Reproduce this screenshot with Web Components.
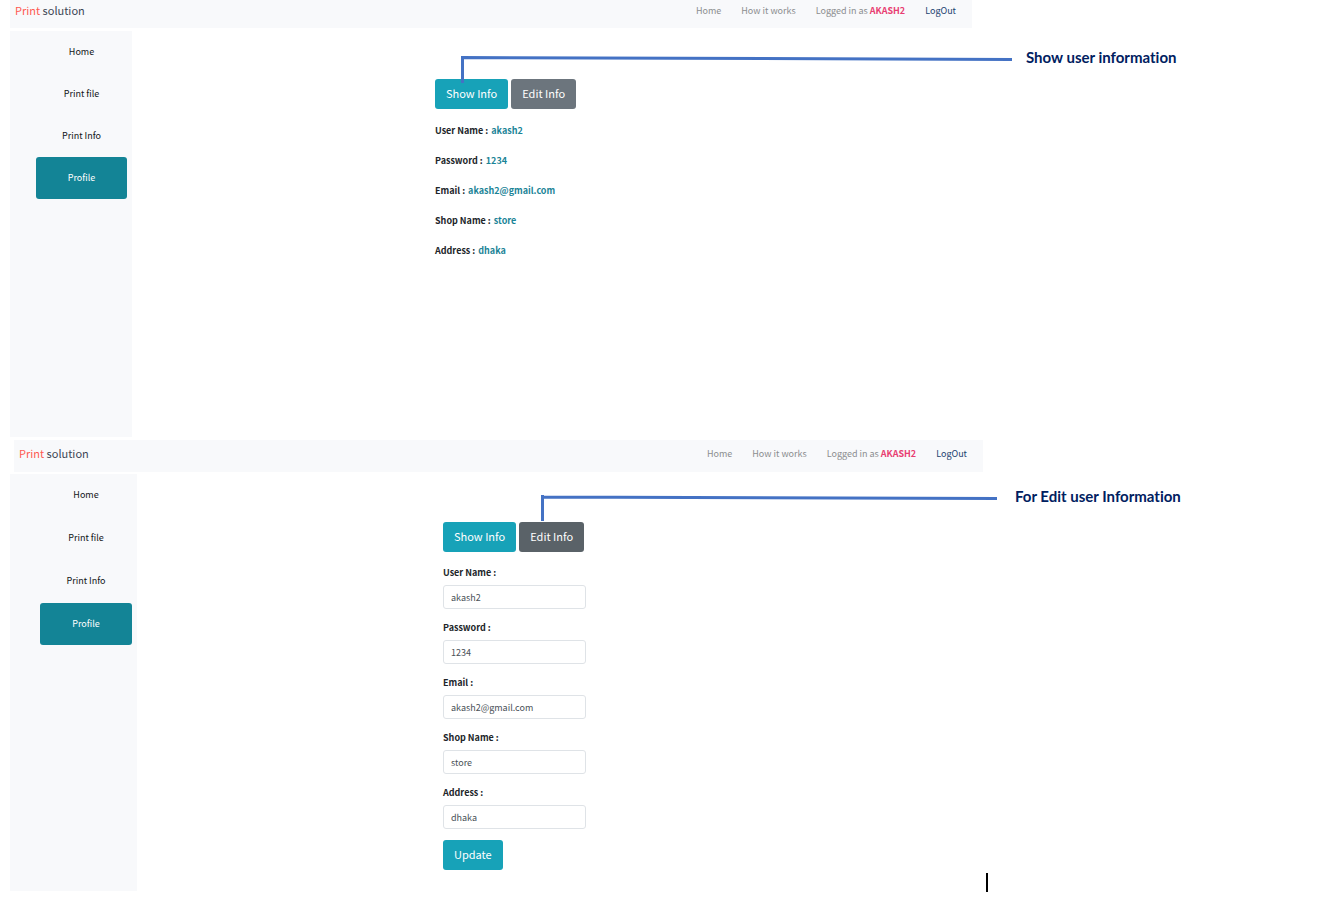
<!DOCTYPE html>
<html lang="en">
<head>
<meta charset="utf-8">
<meta name="viewport" content="width=device-width, initial-scale=1">
<title>Print solution - Profile</title>
<style>
  body { margin: 0; background: #fff; color: #212529; font: 9px/16px "Noto Sans CJK SC", "Noto Sans CJK JP", sans-serif; }
  main { position: relative; }
</style>
</head>
<body>
<main>
  <profile-screen>
    <top-bar slot="bar"></top-bar>
    <side-nav slot="nav"></side-nav>
    <info-tabs></info-tabs>
    <info-list></info-list>
    <call-out slot="note" target="show">Show user information</call-out>
  </profile-screen>
  <profile-screen class="edit">
    <top-bar slot="bar"></top-bar>
    <side-nav slot="nav"></side-nav>
    <info-tabs active="edit"></info-tabs>
    <edit-form></edit-form>
    <call-out slot="note" target="edit">For Edit user Information</call-out>
  </profile-screen>
  <text-caret></text-caret>
</main>

<template id="screen">
  <style>
    :host { display: block; position: relative; padding: 0 350px 3px 10px; --bar-height: 28px; --bar-pad: 0 16px 6px 5px; --nav-width: 122px; --nav-height: 406px; --nav-pad: 0 5px 0 26px; --nav-gap: 0px; --tab-gap: 14px; }
    :host(.edit) { padding-right: 339px; --bar-height: 32px; --bar-pad: 0 16px 4px 5px; --nav-width: 127px; --nav-height: 417px; --nav-pad: 0 5px 0 30px; --nav-gap: 1px; --tab-gap: 13px; }
    .bar { margin-bottom: 3px; }
    :host(.edit) .bar { margin: 0 0 2px 4px; }
    .body { display: flex; align-items: flex-start; }
    .content { flex: 1; padding: 48px 0 0 303px; }
    :host(.edit) .content { padding-left: 306px; }
  </style>
  <div class="bar"><slot name="bar"></slot></div>
  <div class="body"><slot name="nav"></slot><div class="content"><slot></slot></div></div>
  <slot name="note"></slot>
</template>

<template id="bar">
  <style>
    :host { display: block; }
    header { box-sizing: border-box; height: var(--bar-height); padding: var(--bar-pad); background: #f8f9fb; display: flex; align-items: center; justify-content: space-between; }
    a { color: #8b8d8f; text-decoration: none; }
    .brand { padding-bottom: 2px; font-size: 11px; color: #3d4654; }
    .brand span { color: #ff5a52; }
    nav { display: flex; gap: 20px; }
    strong { color: #e83e72; font-weight: 700; }
    .out { color: #1d4371; }
  </style>
  <header>
    <a class="brand" href="#"><span>Print</span> solution</a>
    <nav><a href="#">Home</a><a href="#">How it works</a><a href="#">Logged in as <strong>AKASH2</strong></a><a class="out" href="#">LogOut</a></nav>
  </header>
</template>

<template id="nav">
  <style>
    :host { display: block; flex: none; }
    nav { box-sizing: border-box; width: var(--nav-width); min-height: var(--nav-height); padding: var(--nav-pad); background: #f8f9fb; display: flex; flex-direction: column; gap: var(--nav-gap); }
    a { height: 42px; display: flex; align-items: center; justify-content: center; border-radius: 3px; color: #111417; text-decoration: none; }
    a[aria-current] { background: #138496; color: #fff; }
  </style>
  <nav><a href="#">Home</a><a href="#">Print file</a><a href="#">Print Info</a><a href="#" aria-current="page">Profile</a></nav>
</template>

<template id="tabs">
  <style>
    :host { display: flex; gap: 3px; margin-bottom: var(--tab-gap); }
    button { box-sizing: border-box; height: 30px; padding: 0 11px 2px; border: 0; border-radius: 3px; font: inherit; font-size: 11px; color: #fff; background: #17a2b8; }
    .second { background: #6c757d; }
    :host([active="edit"]) .second { background: #5a6268; }
  </style>
  <button type="button">Show Info</button><button type="button" class="second">Edit Info</button>
</template>

<template id="list">
  <style>
    :host { display: block; font-weight: 700; }
    dl { margin: 0; display: grid; gap: 14px; }
    div { display: flex; gap: 3px; }
    dd { margin: 0; color: #1b8497; }
  </style>
  <dl>
    <div><dt>User Name :</dt><dd>akash2</dd></div>
    <div><dt>Password :</dt><dd>1234</dd></div>
    <div><dt>Email :</dt><dd>akash2@gmail.com</dd></div>
    <div><dt>Shop Name :</dt><dd>store</dd></div>
    <div><dt>Address :</dt><dd>dhaka</dd></div>
  </dl>
</template>

<template id="form">
  <style>
    :host { display: block; }
    form { width: 143px; display: grid; gap: 11px; justify-items: start; }
    .field { display: grid; gap: 4px; width: 100%; }
    label { font-weight: 700; }
    input { box-sizing: border-box; width: 100%; height: 24px; padding: 0 7px; border: 1px solid #dfe3e7; border-radius: 3px; background: #fff; color: #495057; font: inherit; }
    button { height: 30px; padding: 0 11px 2px; border: 0; border-radius: 3px; background: #17a2b8; color: #fff; font: inherit; font-size: 11px; }
  </style>
  <form>
    <div class="field"><label for="user">User Name :</label><input id="user" value="akash2"></div>
    <div class="field"><label for="pass">Password :</label><input id="pass" value="1234"></div>
    <div class="field"><label for="mail">Email :</label><input id="mail" value="akash2@gmail.com"></div>
    <div class="field"><label for="shop">Shop Name :</label><input id="shop" value="store"></div>
    <div class="field"><label for="addr">Address :</label><input id="addr" value="dhaka"></div>
    <button type="button">Update</button>
  </form>
</template>

<template id="callout">
  <style>
    :host { position: absolute; left: 461px; top: 55px; display: flex; gap: 14px; color: #002060; font: 700 15px/18px Lato, sans-serif; font-variant-ligatures: none; white-space: nowrap; pointer-events: none; }
    :host([target="edit"]) { left: 541px; top: 54px; gap: 18px; }
    span { margin-top: -7px; }
    svg { display: none; flex: none; }
    :host([target="show"]) .show, :host([target="edit"]) .edit { display: block; }
    path { fill: none; stroke: #4472c4; stroke-width: 3; }
  </style>
  <svg class="show" width="551" height="28" aria-hidden="true"><path d="M1.5 28V2.5L551 4.5"/></svg>
  <svg class="edit" width="456" height="28" aria-hidden="true"><path d="M1.5 27V1M1.5 3L456 4.5"/></svg>
  <span><slot></slot></span>
</template>

<template id="caret">
  <style>
    :host { position: absolute; left: 986px; top: 873px; width: 2px; height: 19px; background: #000; }
  </style>
</template>

<script>
  const parts = {
    'profile-screen': 'screen', 'top-bar': 'bar', 'side-nav': 'nav', 'info-tabs': 'tabs',
    'info-list': 'list', 'edit-form': 'form', 'call-out': 'callout', 'text-caret': 'caret'
  };
  for (const [name, id] of Object.entries(parts)) {
    customElements.define(name, class extends HTMLElement {
      constructor() {
        super();
        this.attachShadow({ mode: 'open' }).append(document.getElementById(id).content.cloneNode(true));
      }
    });
  }
</script>
</body>
</html>
